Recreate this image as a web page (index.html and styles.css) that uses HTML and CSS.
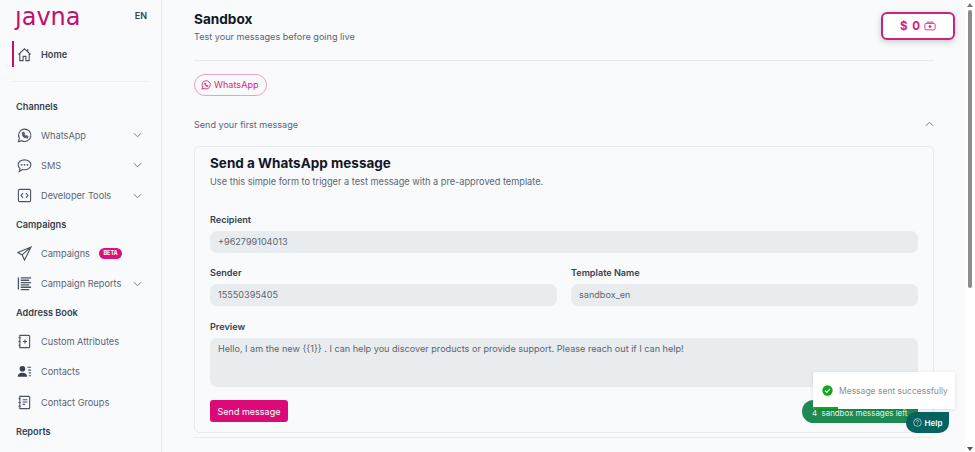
FILE: index.html
```html
<!DOCTYPE html>
<html lang="en">
<head>
    <meta charset="UTF-8">
    <meta name="viewport" content="width=device-width, initial-scale=1.0">
    <title>Sandbox</title>
    <link rel="stylesheet" href="styles.css">
</head>
<body>
    <div class="layout">
        <aside class="sidebar">
            <div class="brand">
                <span class="logo">ȷavna</span>
                <span class="lang">EN</span>
            </div>
            <a class="nav-item home">
                <svg class="nav-icon" viewBox="0 0 16 16"><path d="M1.500 8 8 2l6.500 6M3 7v7.500h3.500v-4.500h3v4.500H13V7M11.500 2v3"/></svg>
                <span>Home</span>
            </a>
            <div class="side-divider"></div>

            <h3 class="side-title first">Channels</h3>
            <a class="nav-item">
                <svg class="nav-icon" viewBox="0 0 16 16"><path d="M1.500 14.500l1-3.500a6.600 6.600 0 1 1 2.500 2.500z"/><path class="thick" d="M5.800 5.200c0 3 2 5 5 5.300l.7-1.300-1.700-.9-.7.700c-.9-.4-1.500-1-1.900-1.900l.7-.7-.8-1.700z"/></svg>
                <span>WhatsApp</span>
                <svg class="chevron" viewBox="0 0 10 6"><path d="M1 1l4 4 4-4"/></svg>
            </a>
            <a class="nav-item">
                <svg class="nav-icon" viewBox="0 0 16 16"><path d="M8 2c3.800 0 6.800 2.300 6.800 5.300S11.800 12.500 8 12.500c-.8 0-1.500-.1-2.200-.3L2.500 14.500l.6-3.300C1.900 10.200 1.200 8.800 1.200 7.300 1.200 4.300 4.200 2 8 2z"/><path class="dots" d="M4.800 7.300h.01M8 7.300h.01M11.200 7.300h.01"/></svg>
                <span>SMS</span>
                <svg class="chevron" viewBox="0 0 10 6"><path d="M1 1l4 4 4-4"/></svg>
            </a>
            <a class="nav-item">
                <svg class="nav-icon" viewBox="0 0 16 16"><rect x="1.500" y="1.500" width="13" height="13" rx="1.500"/><path d="M6.500 5.500 4.300 8l2.200 2.500M9.500 5.500 11.700 8l-2.200 2.500"/></svg>
                <span>Developer Tools</span>
                <svg class="chevron" viewBox="0 0 10 6"><path d="M1 1l4 4 4-4"/></svg>
            </a>

            <h3 class="side-title">Campaigns</h3>
            <a class="nav-item">
                <svg class="nav-icon" viewBox="0 0 16 16"><path d="M15 1 1 7l4.500 2.500L8 15zM15 1 5.500 9.500"/></svg>
                <span>Campaigns</span>
                <span class="beta">BETA</span>
            </a>
            <a class="nav-item">
                <svg class="nav-icon" viewBox="0 0 16 16"><path class="thick" d="M1.500 1.500v13M4 2h11M4 4.500h9M4 7h11M4 9.500h9M4 12h11M4 14.500h9"/></svg>
                <span>Campaign Reports</span>
                <svg class="chevron" viewBox="0 0 10 6"><path d="M1 1l4 4 4-4"/></svg>
            </a>

            <h3 class="side-title">Address Book</h3>
            <a class="nav-item">
                <svg class="nav-icon" viewBox="0 0 16 16"><path d="M3 1.500h9.500a1 1 0 0 1 1 1v11a1 1 0 0 1-1 1H3zM1.500 4h2.500M1.500 8h2.500M1.500 12h2.500M8.500 5.800v4.400M6.300 8h4.400"/></svg>
                <span>Custom Attributes</span>
            </a>
            <a class="nav-item">
                <svg class="nav-icon" viewBox="0 0 16 16"><circle class="solid" cx="5.800" cy="5" r="3"/><path class="solid" d="M.8 13.500c0-2.800 2-4.300 5-4.300s5 1.500 5 4.300z"/><path d="M11 3.500h4M12 6.500h3M12.500 9.500h2.500M12.500 12.500h2.500"/></svg>
                <span>Contacts</span>
            </a>
            <a class="nav-item">
                <svg class="nav-icon" viewBox="0 0 16 16"><path d="M3 1.500h9.500a1 1 0 0 1 1 1v11a1 1 0 0 1-1 1H3zM1.500 4h2.500M1.500 8h2.500M1.500 12h2.500M6 5h5M6 7.500h5M6 10h2.500"/></svg>
                <span>Contact Groups</span>
            </a>

            <h3 class="side-title">Reports</h3>
        </aside>

        <main class="main">
            <header class="page-header">
                <div>
                    <h1>Sandbox</h1>
                    <p class="subtitle">Test your messages before going live</p>
                </div>
                <button class="wallet">
                    <span>$ 0</span>
                    <svg viewBox="0 0 14 11"><rect x="1" y="2.500" width="12" height="7.500" rx="1.500"/><path d="M3 1h8"/><circle class="fill" cx="7" cy="6.200" r="1.500"/></svg>
                </button>
            </header>
            <div class="main-divider"></div>

            <div class="tabs">
                <span class="pill">
                    <svg viewBox="0 0 16 16"><path d="M1.500 14.500l1-3.500a6.600 6.600 0 1 1 2.500 2.500z"/><path class="thick" d="M5.800 5.200c0 3 2 5 5 5.300l.7-1.300-1.700-.9-.7.700c-.9-.4-1.500-1-1.900-1.900l.7-.7-.8-1.700z"/></svg>
                    WhatsApp
                </span>
            </div>

            <div class="accordion-head">
                <span>Send your first message</span>
                <svg class="chevron" viewBox="0 0 10 6"><path d="M1 5l4-4 4 4"/></svg>
            </div>

            <section class="card">
                <h2>Send a WhatsApp message</h2>
                <p class="card-sub">Use this simple form to trigger a test message with a pre-approved template.</p>

                <div class="field recipient">
                    <label>Recipient</label>
                    <div class="input">+962799104013</div>
                </div>
                <div class="field-row">
                    <div class="field">
                        <label>Sender</label>
                        <div class="input">15550395405</div>
                    </div>
                    <div class="field">
                        <label>Template Name</label>
                        <div class="input">sandbox_en</div>
                    </div>
                </div>
                <div class="field">
                    <label>Preview</label>
                    <div class="input textarea">Hello, I am the new {{1}} . I can help you discover products or provide support. Please reach out if I can help!</div>
                </div>
                <button class="send-btn">Send message</button>
            </section>
            <div class="accordion-end"></div>
        </main>

        <div class="scrollbar">
            <span class="arrow up"></span>
            <span class="thumb"></span>
            <span class="arrow down"></span>
        </div>
    </div>

    <div class="counter">4&nbsp; sandbox messages left</div>
    <div class="toast">
        <svg viewBox="0 0 16 16"><circle cx="8" cy="8" r="7.500" fill="#0fa81b"/><path d="M4.500 8.200 7 10.700l4.500-5" fill="none" stroke="#fff" stroke-width="1.600"/></svg>
        <span>Message sent successfully</span>
        <i class="toast-bar"></i>
    </div>
    <button class="help">
        <svg viewBox="0 0 16 16"><circle cx="8" cy="8" r="6.800"/><path d="M6 6.300a2 2 0 1 1 3 1.700c-.7.400-1 .8-1 1.500M8 11.500v.3"/></svg>
        Help
    </button>
</body>
</html>
```

FILE: styles.css
```css
* {
    box-sizing: border-box;
}
html, body {
    height: 100%;
}
body {
    font-family: Inter, "Liberation Sans", sans-serif;
    margin: 0;
    overflow: hidden;
    background-color: #f9fafc;
    color: #4b5563;
}
.layout {
    display: flex;
    height: 452px;
    overflow: hidden;
}

/* sidebar */
.sidebar {
    width: 162px;
    flex: none;
    padding: 0 12px;
    border-right: 1px solid #e9ebef;
    background-color: #f9fafc;
}
.brand {
    display: flex;
    justify-content: space-between;
    align-items: flex-start;
    height: 41px;
    padding: 0 2px 0 3px;
}
.logo {
    font-family: "DejaVu Sans", sans-serif;
    font-size: 24px;
    line-height: 28px;
    color: #c2116b;
    margin-top: 3px;
}
.lang {
    font-size: 9px;
    font-weight: 600;
    color: #374151;
    margin-top: 10px;
}
.nav-item {
    display: flex;
    align-items: center;
    height: 30.300px;
    padding-left: 5px;
    font-size: 9.200px;
    color: #5b6472;
}
.nav-item > span:first-of-type {
    margin-left: 9px;
}
.nav-icon {
    width: 15px;
    height: 15px;
    flex: none;
    fill: none;
    stroke: #4b5563;
    stroke-width: 1.200;
}
.nav-icon .thick {
    stroke-width: 1.400;
}
.nav-icon .dots {
    stroke-width: 2;
    stroke-linecap: round;
}
.nav-icon .solid {
    fill: #374151;
    stroke: none;
}
.chevron {
    width: 9px;
    height: 6px;
    margin-left: auto;
    margin-right: 7px;
    fill: none;
    stroke: #6b7280;
    stroke-width: 1;
}
.home {
    height: 26px;
    border-left: 2px solid #c2116b;
    padding-left: 3px;
    font-weight: 600;
    color: #374151;
}
.side-divider {
    height: 1px;
    margin-top: 14px;
    background-color: #eceef2;
}
.side-title {
    margin: 7.500px 0 7px;
    padding-left: 4px;
    height: 13px;
    line-height: 13px;
    font-size: 9.200px;
    font-weight: 600;
    color: #374151;
}
.side-title.first {
    margin-top: 18px;
}
.beta {
    margin-left: 9px;
    padding: 0 4.500px;
    height: 11px;
    line-height: 11px;
    border-radius: 6px;
    font-size: 5.500px;
    font-weight: 700;
    color: #fff;
    background-color: #d9127e;
}

/* main */
.main {
    flex: 1;
    min-width: 0;
    padding: 0 31px 0 32px;
}
.page-header {
    display: flex;
    justify-content: space-between;
    align-items: flex-start;
    height: 60px;
    margin-right: -21px;
    padding-top: 11px;
}
h1 {
    margin: 0;
    font-size: 13.600px;
    line-height: 17px;
    font-weight: 700;
    color: #111827;
}
.subtitle {
    margin: 2px 0 0;
    font-size: 9.100px;
    line-height: 14px;
    color: #5b6472;
}
.wallet {
    display: flex;
    align-items: center;
    justify-content: center;
    gap: 4px;
    width: 74px;
    height: 28px;
    margin-top: 1px;
    border: 2px solid #c9247f;
    border-radius: 6px;
    background-color: #fff;
    box-shadow: 0 2px 6px rgba(0, 0, 0, 0.2);
    font-family: Inter, sans-serif;
    font-size: 11.500px;
    font-weight: 700;
    word-spacing: 2px;
    color: #d81b7f;
}
.wallet svg {
    width: 12px;
    height: 10px;
    fill: none;
    stroke: #d81b7f;
}
.wallet .fill {
    fill: #d81b7f;
    stroke: none;
}
.main-divider {
    height: 1px;
    background-color: #e8eaee;
}
.tabs {
    display: flex;
    margin-top: 13px;
}
.pill {
    display: flex;
    align-items: center;
    gap: 3px;
    height: 22px;
    padding: 0 7px 1px 6px;
    border: 1px solid #ee9ec8;
    border-radius: 11px;
    font-size: 9.100px;
    color: #d9247f;
}
.pill svg {
    width: 10px;
    height: 10px;
    fill: none;
    stroke: #d9247f;
    stroke-width: 1.400;
}
.accordion-head {
    display: flex;
    align-items: center;
    justify-content: space-between;
    height: 20px;
    margin-top: 18px;
    font-size: 9.050px;
    color: #5b6472;
}
.accordion-head .chevron {
    margin-right: 0;
}
.card {
    height: 287px;
    margin-top: 12px;
    padding: 7px 15px 0;
    border: 1px solid #e8eaee;
    border-radius: 5px;
}
h2 {
    margin: 0;
    font-size: 13.500px;
    line-height: 18px;
    font-weight: 700;
    color: #111827;
}
.card-sub {
    margin: 3px 0 0;
    font-size: 9.200px;
    line-height: 13px;
    color: #5b6472;
}
.recipient {
    margin-top: 25px;
    margin-bottom: 13px;
}
.field {
    flex: 1;
}
.field-row .field, .textarea {
    margin-bottom: 14px;
}
.field-row {
    display: flex;
    gap: 14px;
}
label {
    display: block;
    height: 13px;
    line-height: 13px;
    margin-bottom: 5px;
    font-size: 9.100px;
    font-weight: 600;
    color: #374151;
}
.input {
    height: 22px;
    line-height: 22px;
    padding: 0 8px;
    border-radius: 7px;
    background-color: #e9ecef;
    font-size: 9.100px;
    color: #5b6472;
}
.textarea {
    height: 49px;
    line-height: 13px;
    padding-top: 4px;
    white-space: nowrap;
}
.send-btn {
    display: block;
    width: 78px;
    height: 22px;
    margin-top: -1px;
    padding: 0;
    border: none;
    border-radius: 3px;
    background-color: #dc0a78;
    font-family: Inter, sans-serif;
    font-size: 9px;
    color: #fff;
}
.accordion-end {
    height: 1px;
    margin-top: 4px;
    background-color: #e8eaee;
}

/* scrollbar */
.scrollbar {
    width: 10px;
    flex: none;
    display: flex;
    flex-direction: column;
    align-items: center;
    background-color: #fff;
}
.thumb {
    width: 4px;
    height: 278px;
    margin-top: 3px;
    border-radius: 2px;
    background-color: #8c8c8c;
}
.arrow {
    border-left: 3px solid transparent;
    border-right: 3px solid transparent;
}
.arrow.up {
    margin-top: 3px;
    border-bottom: 4px solid #777;
}
.arrow.down {
    margin-top: auto;
    margin-bottom: 1px;
    border-top: 4px solid #555;
}

/* things lying over the page */
.counter {
    position: absolute;
    left: 802px;
    top: 400px;
    width: 116px;
    height: 23px;
    padding: 7px 0 0 10px;
    line-height: 12px;
    border-radius: 12px 0 0 12px;
    background-color: #1e8a52;
    font-size: 7.900px;
    color: #e5f3ea;
}
.toast {
    position: absolute;
    left: 813px;
    top: 372px;
    width: 142px;
    height: 37px;
    display: flex;
    align-items: center;
    gap: 6px;
    padding-left: 9px;
    border-radius: 2px;
    background-color: #fff;
    box-shadow: 0 1px 4px rgba(0, 0, 0, 0.12);
    font-size: 8.500px;
    color: #8a8f96;
    overflow: hidden;
}
.toast svg {
    width: 11px;
    height: 11px;
    flex: none;
}
.toast-bar {
    position: absolute;
    left: 0;
    bottom: 0;
    width: 25px;
    height: 2px;
    background-color: #0fa81b;
}
.help {
    position: absolute;
    left: 906px;
    top: 412px;
    width: 43px;
    height: 21px;
    display: flex;
    align-items: center;
    justify-content: center;
    gap: 3px;
    padding: 0;
    border: none;
    border-radius: 10px 0 10px 10px;
    background-color: #05635f;
    font-family: Inter, sans-serif;
    font-size: 8px;
    font-weight: 600;
    color: #fff;
}
.help svg {
    width: 9px;
    height: 9px;
    fill: none;
    stroke: #fff;
}
```
